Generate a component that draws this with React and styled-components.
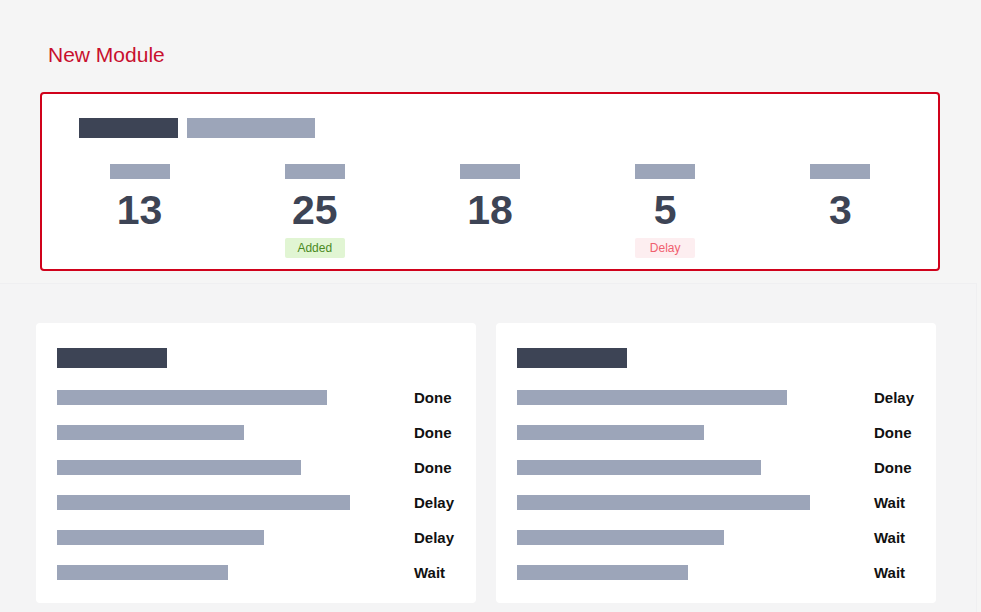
import styled, { createGlobalStyle } from "styled-components";

const GlobalStyle = createGlobalStyle`
  body {
    margin: 0;
    background: #f5f5f5;
    font-family: "Liberation Sans", Arial, sans-serif;
  }
`;

const Page = styled.div`
  width: 981px;
  height: 612px;
  background: #f5f5f5;
  overflow: hidden;
`;

const TopSection = styled.section`
  padding: 43px 41px 12px 40px;
`;

const Title = styled.h1`
  margin: 0 0 25px 8px;
  font-size: 21px;
  line-height: 24px;
  font-weight: 400;
  color: #c8102e;
`;

const SummaryBox = styled.div`
  border: 2px solid #d0021b;
  border-radius: 4px;
  background: #fff;
  padding: 24px 10px 11px;
`;

const HeaderBars = styled.div`
  display: flex;
  gap: 9px;
  padding-left: 27px;
`;

const Bar = styled.div`
  height: ${(p) => p.$h || 15}px;
  width: ${(p) => p.$w}px;
  background: ${(p) => (p.$dark ? "#3d4455" : "#9ca5b9")};
  flex-shrink: 0;
`;

const StatGrid = styled.div`
  display: grid;
  grid-template-columns: repeat(5, 1fr);
  margin-top: 26px;
`;

const Stat = styled.div`
  display: flex;
  flex-direction: column;
  align-items: center;
`;

const Number = styled.div`
  margin-top: 9px;
  margin-bottom: 2px;
  font-size: 41px;
  line-height: 44px;
  font-weight: 700;
  color: #3d4455;
`;

const Badge = styled.span`
  margin-top: 4px;
  width: 60px;
  height: 20px;
  line-height: 20px;
  text-align: center;
  font-size: 12px;
  border-radius: 2px;
  color: ${(p) => (p.$tone === "red" ? "#f0606e" : "#4a8a1f")};
  background: ${(p) => (p.$tone === "red" ? "#fdeef0" : "#e1f5d3")};
`;

const LowerSection = styled.section`
  width: 977px;
  height: 329px;
  box-sizing: border-box;
  padding: 39px 0 0 36px;
  background: #f4f4f5;
  border-top: 1px solid #efeff1;
  border-right: 1px solid #efeff1;
  display: flex;
  gap: 20px;
`;

const Card = styled.div`
  width: 440px;
  height: 280px;
  box-sizing: border-box;
  background: #fff;
  border-radius: 4px;
  padding: 25px 21px 23px;
`;

const List = styled.div`
  margin-top: 22px;
  display: flex;
  flex-direction: column;
  gap: 20px;
`;

const Row = styled.div`
  display: grid;
  grid-template-columns: 357px auto;
  align-items: center;
  height: 15px;
`;

const Status = styled.span`
  font-size: 15px;
  line-height: 15px;
  font-weight: 700;
  color: #111;
`;

const stats = [
  { value: 13 },
  { value: 25, badge: "Added", tone: "green" },
  { value: 18 },
  { value: 5, badge: "Delay", tone: "red" },
  { value: 3 },
];

const widths = [270, 187, 244, 293, 207, 171];

const cards = [
  ["Done", "Done", "Done", "Delay", "Delay", "Wait"],
  ["Delay", "Done", "Done", "Wait", "Wait", "Wait"],
];

export default function App() {
  return (
    <>
      <GlobalStyle />
      <Page>
        <TopSection>
          <Title>New Module</Title>
          <SummaryBox>
            <HeaderBars>
              <Bar $dark $w={99} $h={20} />
              <Bar $w={128} $h={20} />
            </HeaderBars>
            <StatGrid>
              {stats.map((s, i) => (
                <Stat key={i}>
                  <Bar $w={60} />
                  <Number>{s.value}</Number>
                  {s.badge && <Badge $tone={s.tone}>{s.badge}</Badge>}
                </Stat>
              ))}
            </StatGrid>
          </SummaryBox>
        </TopSection>
        <LowerSection>
          {cards.map((statuses, c) => (
            <Card key={c}>
              <Bar $dark $w={110} $h={20} />
              <List>
                {statuses.map((st, i) => (
                  <Row key={i}>
                    <Bar $w={widths[i]} />
                    <Status>{st}</Status>
                  </Row>
                ))}
              </List>
            </Card>
          ))}
        </LowerSection>
      </Page>
    </>
  );
}
